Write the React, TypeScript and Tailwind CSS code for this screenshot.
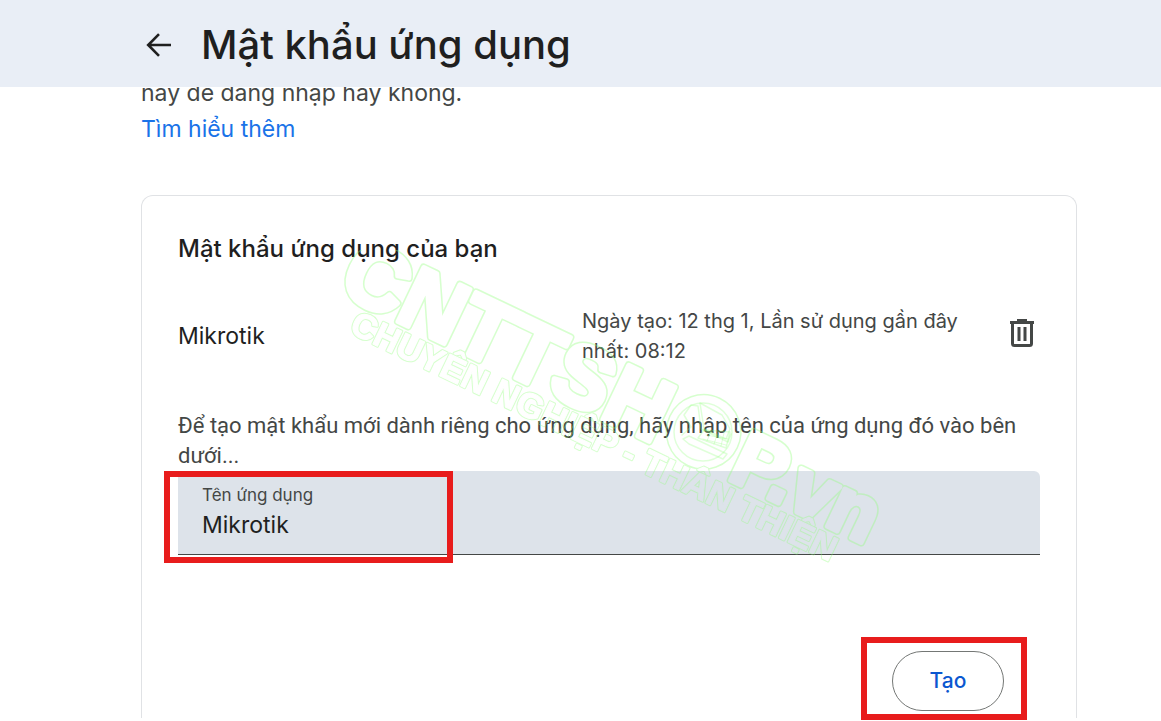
const wordmark = (
  <>
    <text x="0" y="0" fontSize="87">
      CNTTSH
    </text>
    <circle cx="392" cy="-32" r="34" />
    <text x="432" y="0" fontSize="78">
      P.vn
    </text>
  </>
);

const tagline = (
  <text x="28" y="31" fontSize="35">
    CHUYÊN NGHIỆP - THÂN THIỆN
  </text>
);

function Watermark() {
  return (
    <svg
      aria-hidden="true"
      viewBox="336 250 560 330"
      className="pointer-events-none absolute top-[54px] left-[194px] h-[330px] w-[560px] font-['Liberation_Sans',Arial,sans-serif] font-bold"
    >
      <defs>
        <mask id="outline" maskUnits="userSpaceOnUse" x="300" y="200" width="640" height="400">
          <g transform="translate(336 292) rotate(25.5)" strokeLinejoin="round">
            <g fill="white" stroke="white" strokeWidth="8">
              {wordmark}
            </g>
            <g fill="black" stroke="black" strokeWidth="5">
              {wordmark}
            </g>
            <g fill="white" stroke="white" strokeWidth="3">
              {tagline}
            </g>
            <g fill="black" stroke="black" strokeWidth="1">
              {tagline}
            </g>
          </g>
        </mask>
      </defs>
      <rect x="300" y="200" width="640" height="400" fill="#8cff78" fillOpacity="0.36" mask="url(#outline)" />
      {/* Shopping cart inside the letter O */}
      <g
        fill="none"
        stroke="#8cff78"
        strokeOpacity="0.28"
        strokeWidth="1.5"
        strokeLinejoin="round"
        strokeLinecap="round"
      >
        <circle cx="703" cy="432" r="29" />
        <path d="M691 405l7 1l3 23l27 13l3-8M691 405l-7 10l7 12l-9 8" />
        <path d="M700 403l22 12l8 14l-4 10l-22-10z" />
        <path d="M704 430l26 2l-4 16l-28-10z" />
        <path d="M706 435l22 4M703 439l23 6M711 431l-4 10M718 432l-4 12M724 433l-3 13" strokeWidth="1" />
        <path d="M683 439l6-3l38 18l-4 5l-34-15z" />
      </g>
    </svg>
  );
}

function BackIcon() {
  return (
    <svg viewBox="0 0 26 24" className="h-6 w-[26px]" fill="none" stroke="currentColor" strokeWidth="2.6">
      <path d="M25 12H2.5M13 1.2L2.2 12L13 22.8" />
    </svg>
  );
}

function TrashIcon() {
  return (
    <svg viewBox="0 0 26 28" className="h-7 w-[26px]" fill="none" stroke="currentColor">
      <path d="M1 3.5h24" strokeWidth="3" />
      <path d="M8 1.5h10" strokeWidth="3" />
      <path d="M3.5 4v20.5q0 2 2 2h15q2 0 2-2V4" strokeWidth="3" />
      <path d="M10 8v14M16 8v14" strokeWidth="3" />
    </svg>
  );
}

export default function App() {
  return (
    <div className="bg-white pb-[3px] font-[Inter,Roboto,sans-serif] text-[#1f1f1f]">
      <header className="relative z-10 flex h-[87px] items-center gap-[29px] bg-[#e9eef6] pt-0.5 pl-[146px]">
        <button type="button" aria-label="Quay lại">
          <BackIcon />
        </button>
        <h1 className="text-[40px] leading-[48px] font-medium">Mật khẩu ứng dụng</h1>
      </header>

      <main className="mr-[84px] ml-[141px]">
        <div className="-mt-3 text-[23px] leading-9 text-[#444746]">
          <p>này để đăng nhập hay không.</p>
          <a href="#" className="text-[#1a73e8]">
            Tìm hiểu thêm
          </a>
        </div>

        <section className="relative mt-12 rounded-t-xl border border-b-0 border-[#e0e2e5] px-9 pt-[37px] pb-[7px]">
          <h2 className="text-[24px] leading-8 font-medium">Mật khẩu ứng dụng của bạn</h2>

          <div className="mt-[41px] flex items-start">
            <p className="flex-1 self-center text-[23px] leading-[30px]">Mikrotik</p>
            <p className="w-[400px] text-[20px] leading-[30px] text-[#444746]">
              Ngày tạo: 12 thg 1, Lần sử dụng gần đây nhất: 08:12
            </p>
            <button type="button" aria-label="Xoá" className="mt-[13px] mr-[5px] ml-[27px] text-[#444746]">
              <TrashIcon />
            </button>
          </div>

          <p className="mt-[45px] font-[Roboto,sans-serif] text-[22px] leading-[30px] text-[#444746]">
            Để tạo mật khẩu mới dành riêng cho ứng dụng, hãy nhập tên của ứng dụng đó vào bên dưới...
          </p>

          <div className="relative rounded-t-md border-b border-[#444746] bg-[#dde3ea] px-6 pt-3 pb-[11px]">
            <label htmlFor="app-name" className="block text-[17px] leading-6 text-[#444746]">
              Tên ứng dụng
            </label>
            <input
              id="app-name"
              type="text"
              defaultValue="Mikrotik"
              className="block h-9 w-full bg-transparent text-[23px] outline-none"
            />
            <div className="pointer-events-none absolute top-0 -left-3.5 h-[92px] w-[289px] border-6 border-[#e81c1c]" />
          </div>

          <div className="mt-24 flex justify-end pr-9">
            <div className="relative">
              <button
                type="button"
                className="h-[60px] w-28 rounded-full border border-[#747775] text-[21px] font-medium text-[#0b57d0]"
              >
                Tạo
              </button>
              <div className="pointer-events-none absolute -top-3.5 -right-[23px] -left-[31px] h-[83px] border-6 border-[#e81c1c]" />
            </div>
          </div>

          <Watermark />
        </section>
      </main>
    </div>
  );
}
